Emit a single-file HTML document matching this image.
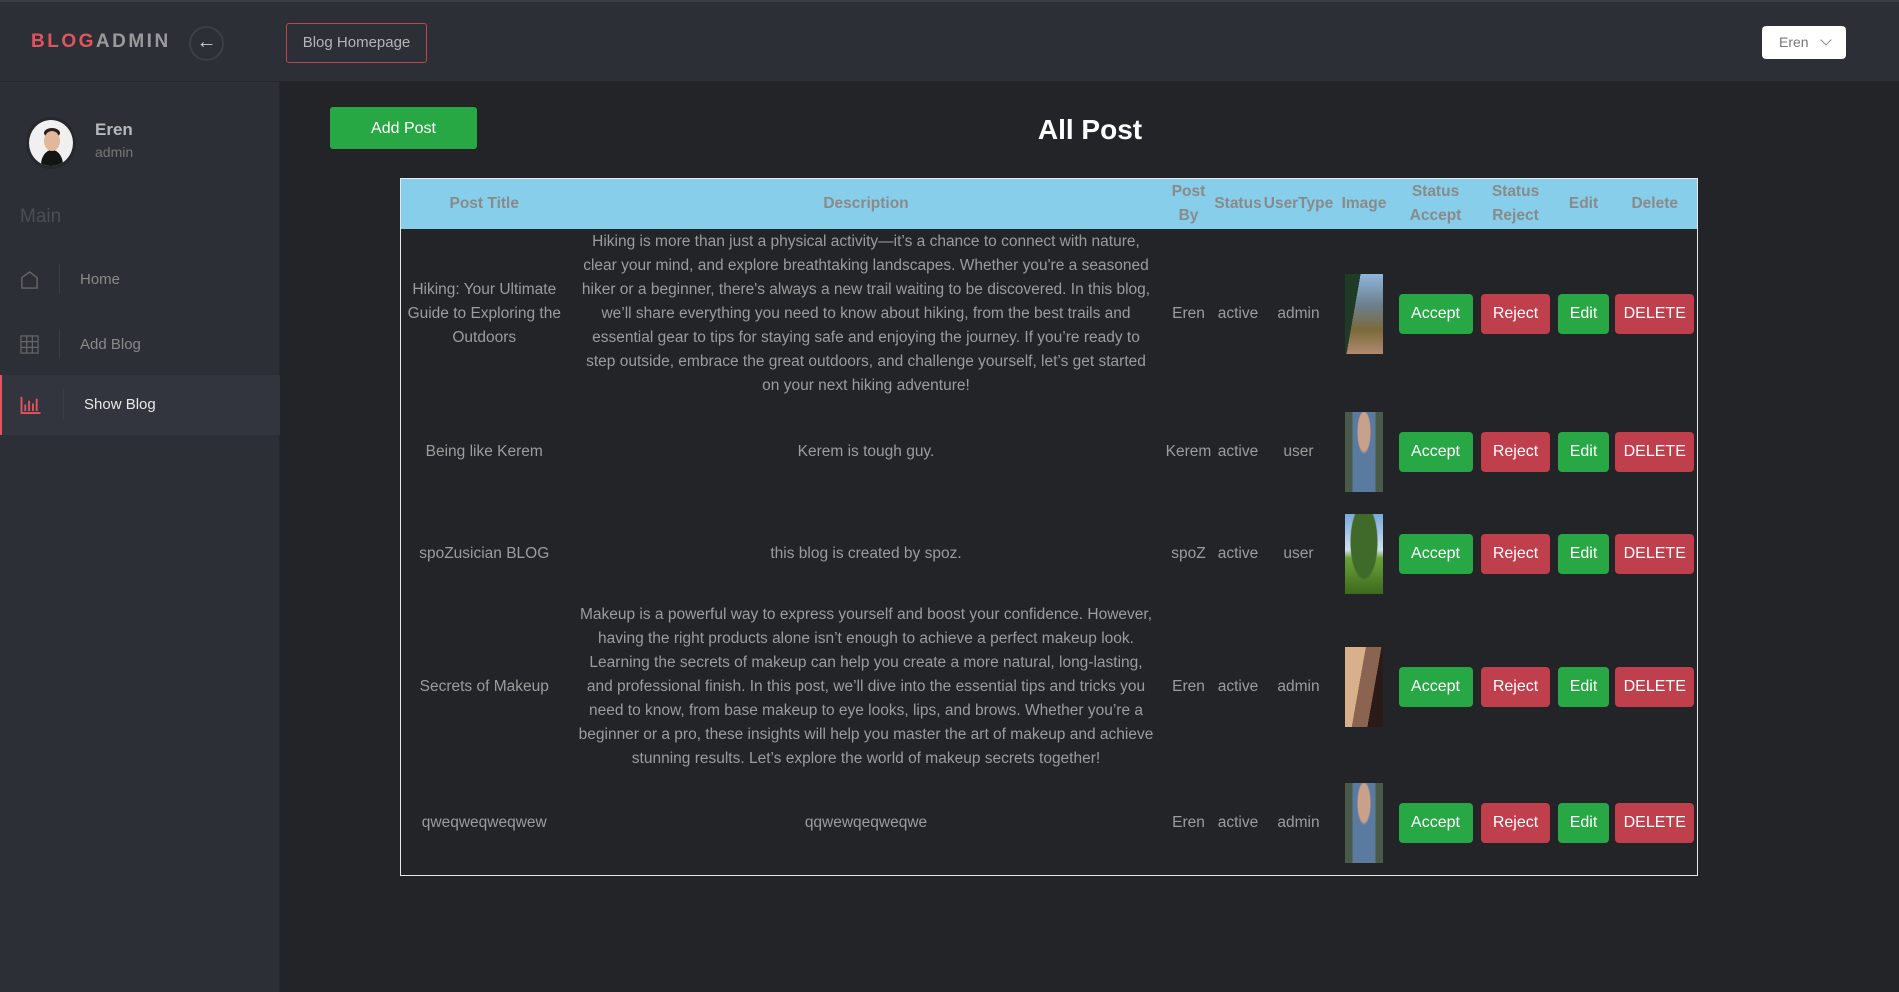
<!DOCTYPE html>
<html><head><meta charset="utf-8"><style>
*{box-sizing:border-box;margin:0;padding:0}
body{width:1899px;height:992px;background:#222428;font-family:"Liberation Sans",sans-serif;overflow:hidden;position:relative}
.hdr{position:absolute;left:0;top:0;width:1899px;height:82px;background:#2c2f35;border-bottom:1px solid #25272b;border-top:2px solid #3a3d42}
.logo{position:absolute;left:31px;top:29px;font-size:19px;letter-spacing:2.5px;font-weight:bold}
.back{position:absolute;left:189px;top:24px;width:35px;height:35px;border:2px solid #3c3f45;border-radius:50%;color:#cfcfcf;font-size:20px;text-align:center;line-height:29px}
.bh{position:absolute;left:286px;top:21px;width:141px;height:40px;border:1px solid #c8414e;border-radius:3px;color:#b5b5b5;font-size:15px;text-align:center;line-height:38px}
.dd{position:absolute;left:1762px;top:24px;width:84px;height:33px;background:#fff;border-radius:4px;color:#777;font-size:14px;line-height:33px;padding-left:17px}
.side{position:absolute;left:0;top:82px;width:280px;height:910px;background:#2c2f35;border-right:1px solid #26282c}
.av{position:absolute;left:26px;width:50px;height:52px;border-radius:50%;background:#f0f0f0;border:3px solid #26282c;overflow:hidden}
.av i{position:absolute;display:block;border-radius:50%}
.nm{position:absolute;left:95px;top:119px;color:#b8b8b8;font-size:17px;font-weight:bold}
.rl{position:absolute;left:95px;top:143px;color:#777;font-size:14px}
.main{position:absolute;left:20px;top:204px;color:#4b4e55;font-size:19px}
.it{position:absolute;left:0;width:280px;height:60px}
.it .ic{position:absolute;left:20px;top:20px;width:19px;height:19px}
.it .dv{position:absolute;left:59px;top:14px;width:1px;height:30px;background:#3a3d43}
.it .tx{position:absolute;left:80px;top:21px;color:#8a8a8a;font-size:15px}
.add{position:absolute;left:330px;top:107px;width:147px;height:42px;background:#28a745;border-radius:3px;color:#fff;font-size:16px;text-align:center;line-height:43px}
.ttl{position:absolute;left:990px;top:114px;width:200px;text-align:center;color:#fff;font-size:28px;font-weight:bold}
table{position:absolute;left:400px;top:178px;width:1297px;border-collapse:collapse;border:1px solid #e8e8e8;table-layout:fixed}
th{background:#87ceeb;color:#8a8a8a;font-size:15.5px;font-weight:bold;height:50px;line-height:24px;text-align:center;padding:0}
td{color:#9c9c9c;font-size:15.5px;text-align:center;line-height:24px;vertical-align:middle;padding:0;white-space:nowrap}
.b{display:inline-block;height:40px;line-height:40px;border-radius:4px;color:#fff;font-size:16px}
.g{background:#28a745}.r{background:#bf404c}
.img{display:inline-block;width:38px;height:80px;vertical-align:middle}
</style></head><body>
<div class="hdr">
<div class="logo"><span style="color:#e0555f">BLOG</span><span style="color:#9a9a9a">ADMIN</span></div>
<div class="back">&#8592;</div>
<div class="bh">Blog Homepage</div>
<div class="dd">Eren <span style="display:inline-block;width:8px;height:8px;border-right:1.5px solid #888;border-bottom:1.5px solid #888;transform:rotate(45deg);margin-left:10px;position:relative;top:-3px"></span></div>
</div>
<div class="side">
<div class="av" style="top:35px"><i style="left:12px;top:30px;width:22px;height:30px;background:#151515"></i><i style="left:15px;top:8px;width:16px;height:10px;background:#2a1f1a"></i><i style="left:15px;top:11px;width:16px;height:20px;background:#e2b89c"></i></div>
<div class="nm" style="top:38px">Eren</div>
<div class="rl" style="top:62px">admin</div>
<div class="main" style="top:124px">Main</div>
<div class="it" style="top:168px"><svg class="ic" viewBox="0 0 20 20"><path d="M2 19V8L10 2L18 8V19Z" fill="none" stroke="#666" stroke-width="1.5"/></svg><div class="dv"></div><div class="tx">Home</div></div>
<div class="it" style="top:233px"><svg class="ic" viewBox="0 0 20 20" fill="none" stroke="#666" stroke-width="1.3"><rect x="1" y="1" width="18" height="18"/><path d="M7 1V19M13 1V19M1 7H19M1 13H19"/></svg><div class="dv"></div><div class="tx">Add Blog</div></div>
<div class="it" style="top:293px;background:#32353d;border-left:2px solid #e0555f"><svg class="ic" viewBox="0 0 22 20" style="left:18px;width:22px"><path d="M1 2V19H21M5 10V17M9 6V17M13 9V17M17 4V17" stroke="#e0555f" stroke-width="2" fill="none"/></svg><div class="dv" style="left:61px"></div><div class="tx" style="left:82px;color:#e8e8e8">Show Blog</div></div>
</div>
<div class="add">Add Post</div>
<div class="ttl">All Post</div>
<table>
<colgroup><col style="width:167px"><col style="width:597px"><col style="width:48px"><col style="width:51px"><col style="width:70px"><col style="width:61px"><col style="width:82px"><col style="width:78px"><col style="width:58px"><col style="width:85px"></colgroup>
<tr><th>Post Title</th><th>Description</th><th>Post<br>By</th><th>Status</th><th>UserType</th><th>Image</th><th>Status<br>Accept</th><th>Status<br>Reject</th><th>Edit</th><th>Delete</th></tr>
<tr style="height:170px"><td>Hiking: Your Ultimate<br>Guide to Exploring the<br>Outdoors</td><td>Hiking is more than just a physical activity—it’s a chance to connect with nature,<br>clear your mind, and explore breathtaking landscapes. Whether you're a seasoned<br>hiker or a beginner, there's always a new trail waiting to be discovered. In this blog,<br>we’ll share everything you need to know about hiking, from the best trails and<br>essential gear to tips for staying safe and enjoying the journey. If you’re ready to<br>step outside, embrace the great outdoors, and challenge yourself, let’s get started<br>on your next hiking adventure!</td><td>Eren</td><td>active</td><td>admin</td><td><span class="img" style="background:linear-gradient(100deg,#1f3a25 0 30%,transparent 30%),linear-gradient(#8fb6dc,#6b7f8a 40%,#7b6a3a 70%,#b08a70)"></span></td><td><span class="b g" style="width:74px">Accept</span></td><td><span class="b r" style="width:69px">Reject</span></td><td><span class="b g" style="width:51px">Edit</span></td><td><span class="b r" style="width:79px">DELETE</span></td></tr>
<tr style="height:106px"><td>Being like Kerem</td><td>Kerem is tough guy.</td><td>Kerem</td><td>active</td><td>user</td><td><span class="img" style="background:radial-gradient(ellipse at 50% 25%,#c9a08a 0 6px,transparent 7px),linear-gradient(90deg,#4a5a48 0 20%,#5a7aa0 20% 80%,#4a5a48 80%)"></span></td><td><span class="b g" style="width:74px">Accept</span></td><td><span class="b r" style="width:69px">Reject</span></td><td><span class="b g" style="width:51px">Edit</span></td><td><span class="b r" style="width:79px">DELETE</span></td></tr>
<tr style="height:98px"><td>spoZusician BLOG</td><td>this blog is created by spoz.</td><td>spoZ</td><td>active</td><td>user</td><td><span class="img" style="background:radial-gradient(ellipse at 50% 35%,#3f6a2a 0 13px,transparent 14px),linear-gradient(#7aa8dc,#cfe0ee 45%,#6aa03a 55%,#3d6a1e)"></span></td><td><span class="b g" style="width:74px">Accept</span></td><td><span class="b r" style="width:69px">Reject</span></td><td><span class="b g" style="width:51px">Edit</span></td><td><span class="b r" style="width:79px">DELETE</span></td></tr>
<tr style="height:168px"><td>Secrets of Makeup</td><td>Makeup is a powerful way to express yourself and boost your confidence. However,<br>having the right products alone isn’t enough to achieve a perfect makeup look.<br>Learning the secrets of makeup can help you create a more natural, long-lasting,<br>and professional finish. In this post, we’ll dive into the essential tips and tricks you<br>need to know, from base makeup to eye looks, lips, and brows. Whether you’re a<br>beginner or a pro, these insights will help you master the art of makeup and achieve<br>stunning results. Let’s explore the world of makeup secrets together!</td><td>Eren</td><td>active</td><td>admin</td><td><span class="img" style="background:linear-gradient(100deg,#d9b08c 0 40%,#8a6450 40% 70%,#2a1a18 70%)"></span></td><td><span class="b g" style="width:74px">Accept</span></td><td><span class="b r" style="width:69px">Reject</span></td><td><span class="b g" style="width:51px">Edit</span></td><td><span class="b r" style="width:79px">DELETE</span></td></tr>
<tr style="height:105px"><td>qweqweqweqwew</td><td>qqwewqeqweqwe</td><td>Eren</td><td>active</td><td>admin</td><td><span class="img" style="background:radial-gradient(ellipse at 50% 25%,#c9a08a 0 6px,transparent 7px),linear-gradient(90deg,#4a5a48 0 20%,#5a7aa0 20% 80%,#4a5a48 80%)"></span></td><td><span class="b g" style="width:74px">Accept</span></td><td><span class="b r" style="width:69px">Reject</span></td><td><span class="b g" style="width:51px">Edit</span></td><td><span class="b r" style="width:79px">DELETE</span></td></tr>
</table>
</body></html>
